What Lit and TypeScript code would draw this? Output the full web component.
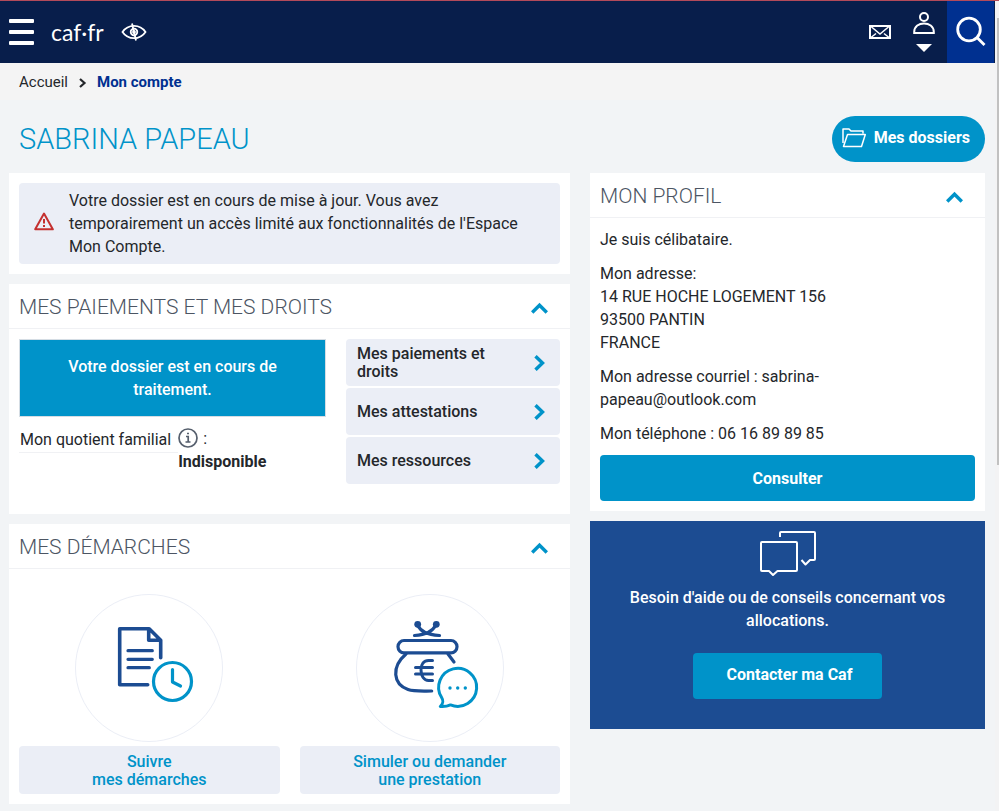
import { LitElement, html, css, svg } from "lit";
import { customElement, property, state } from "lit/decorators.js";

const reset = css`
  * { box-sizing: border-box; margin: 0; }
  a { color: inherit; text-decoration: none; }
  button { font: inherit; border: 0; padding: 0; background: none; color: inherit; cursor: pointer; }
  svg { display: block; flex: none; }
`;

@customElement("caf-header")
class CafHeader extends LitElement {
  static styles = [reset, css`
    :host { display: block; }
    .bar { display: flex; align-items: center; height: 62px; background: #081e4b; color: #fff; padding-left: 9px; }
    .logo { margin: 0 17px; font: 400 23px/32px Lato, sans-serif; }
    .tools { display: flex; align-items: center; align-self: stretch; margin-left: auto; padding-right: 1px; }
    .user { display: flex; flex-direction: column; align-items: center; gap: 10px; margin: 0 12px 0 22px; }
    .search { display: grid; place-items: center; width: 47px; align-self: stretch; background: #003090; }
  `];

  render() {
    return html`
      <header class="bar">
        <button class="menu" aria-label="Menu">
          <svg width="25" height="28" viewBox="0 0 25 28" fill="#fff">
            <rect y="1" width="25" height="4" rx="1" /><rect y="12" width="25" height="4" rx="1" /><rect y="23" width="25" height="4" rx="1" />
          </svg>
        </button>
        <a class="logo" href="#">caf·fr</a>
        <button aria-label="Contraste">
          <svg width="26" height="18" viewBox="0 0 26 18" fill="none" stroke="#fff" stroke-width="1.800">
            <path d="M1.500 9C7 .8 19 .8 24.500 9 19 17.200 7 17.200 1.500 9Z" />
            <circle cx="13" cy="9" r="3.300" /><path d="M11 0.500 15 17.500" /><circle cx="13" cy="9" r="1" />
          </svg>
        </button>
        <nav class="tools">
          <a href="#" aria-label="Messages">
            <svg width="22" height="14" viewBox="0 0 22 14" fill="none" stroke="#fff" stroke-width="2">
              <path d="M1 1h20v12H1Z" /><path d="M2 1.500l9 7.500 9-7.500M2 12.500l5-4M20 12.500l-5-4" stroke-width="1.500" />
            </svg>
          </a>
          <button class="user" aria-label="Compte">
            <svg width="22" height="22" viewBox="0 0 22 22" fill="none" stroke="#fff" stroke-width="2">
              <circle cx="11" cy="5" r="4" /><path d="M1.200 21v-1C1.200 8.500 20.800 8.500 20.800 20v1Z" />
            </svg>
            <svg width="16" height="8" viewBox="0 0 16 8" fill="#fff"><path d="M0 0h16L8 8Z" /></svg>
          </button>
          <button class="search" aria-label="Rechercher">
            <svg width="30" height="32" viewBox="0 0 30 32" fill="none" stroke="#fff" stroke-width="2.800">
              <circle cx="13" cy="13.500" r="11.300" /><path d="M21 21.500 28.500 29" />
            </svg>
          </button>
        </nav>
      </header>`;
  }
}

@customElement("caf-panel")
class CafPanel extends LitElement {
  @property() heading = "";
  @state() private open = true;

  static styles = [reset, css`
    :host { display: block; background: #fff; }
    .head { display: flex; align-items: center; justify-content: space-between; height: 45px; padding: 1px 22px 0 10px; border-bottom: 1px solid #f0f1f4; }
    .heading { font-size: 21px; line-height: 26px; font-weight: 300; color: #4c5563; }
    .toggle { padding-top: 3px; }
    .body { padding: 10px; }
    .closed { transform: rotate(180deg); }
  `];

  render() {
    return html`
      <header class="head">
        <h2 class="heading">${this.heading}</h2>
        <button class="toggle" aria-label=${this.heading} aria-expanded=${this.open} @click=${() => (this.open = !this.open)}>
          <svg class=${this.open ? "" : "closed"} width="17" height="12" viewBox="0 0 17 12" fill="none" stroke="#0093c9" stroke-width="3.400">
            <path d="M1.200 10.500 8.500 3.200l7.300 7.300" />
          </svg>
        </button>
      </header>
      ${this.open ? html`<div class="body"><slot></slot></div>` : ""}`;
  }
}

const fileClock = svg`
  <g fill="none" stroke="#1c4c92" stroke-width="3.600" stroke-linecap="round" stroke-linejoin="round">
    <path d="M72.700 90.700H44.700V34.700h29.500L85.700 46.300v17.400M73.700 35v11.300h11.500" />
    <path d="M53 56.700h24.300M53 65.300h24.300M53 73.700h21.300" stroke-width="3.200" />
  </g>
  <g fill="none" stroke="#0093c9" stroke-width="3.200" stroke-linecap="round" stroke-linejoin="round">
    <circle cx="97.500" cy="87.500" r="19" /><path d="M97.500 75.500v12.500l8 4" />
  </g>`;

const purseChat = svg`
  <g fill="none" stroke="#1c4c92" stroke-width="3.200" stroke-linecap="round" stroke-linejoin="round">
    <rect x="42" y="46.500" width="59" height="12.300" rx="6" />
    <path d="M58.500 41.500C70 40.500 76 38 80 31M83.500 41.500C71 40.500 65 38 61.500 31" />
    <path d="M50 60C35 73 37 90 52 95.500 58 97.600 66 97 75.700 97M92 60l6 8" />
    <path d="M76.500 66.500h-4c-4.500 0-7.500 3.500-7.500 9.500s3 10.500 7.500 10.500h4M59.500 73.500h17M59.500 80h17" stroke-width="3" />
  </g>
  <g fill="#1c4c92"><circle cx="61.700" cy="30.300" r="3.400" /><circle cx="80.300" cy="30.300" r="3.400" /></g>
  <path d="M94.500 110.900A19 19 0 1 0 85.500 103.300C87.500 106.500 87.800 109 84.300 112.500 88 112.800 91.500 112.300 94.500 110.900Z" fill="none" stroke="#0093c9" stroke-width="3" stroke-linejoin="round" />
  <g fill="#0093c9"><circle cx="94" cy="94" r="1.700" /><circle cx="101.700" cy="94" r="1.700" /><circle cx="109.300" cy="94" r="1.700" /></g>`;

@customElement("app-root")
class AppRoot extends LitElement {
  static styles = [reset, css`
    :host { display: block; font: 400 16px/23px Roboto, sans-serif; color: #24272b; }
    .shell { display: flex; min-height: 100vh; background: #f2f4f6; border-top: 1px solid #b34a5a; }
    .page { flex: 1; min-width: 0; }
    .track { width: 4px; flex: none; padding: 17px 0 0 2px; background: #f3f3f4; }
    .thumb { height: 447px; background: #c1c1c1; }
    .crumbs { display: flex; align-items: center; gap: 10px; height: 37px; padding: 2px 0 0 19px; background: #f4f4f4; font-size: 15px; }
    .here { font-weight: 700; color: #003090; }
    .top { display: flex; align-items: center; justify-content: space-between; height: 73px; padding: 5px 10px 0 19px; }
    .name { font-size: 29px; line-height: 36px; font-weight: 300; color: #0093c9; }
    .files { display: flex; align-items: center; gap: 8px; height: 46px; padding: 0 15px 3px 10px; border-radius: 23px; background: #0093c9; color: #fff; font-weight: 700; }
    .columns { display: grid; grid-template-columns: minmax(0, 1fr) 395px; gap: 20px; align-items: start; padding: 0 10px 7px 9px; }
    .stack { display: flex; flex-direction: column; gap: 10px; }
    .notice { background: #fff; padding: 10px; }
    .alert { display: flex; align-items: center; gap: 15px; padding: 6px 15px; border-radius: 4px; background: #ebeef6; }
    .pay { display: grid; grid-template-columns: minmax(0, 1fr) 214px; gap: 20px; padding-bottom: 20px; }
    .status { padding: 15px 40px; border: 1px solid #d5dde4; background: #0093c9; color: #fff; text-align: center; font-weight: 500; }
    .quotient { display: grid; grid-template-columns: auto 1fr; align-items: start; margin-top: 10px; }
    .label { padding: 1px 7px 1px 1px; border-bottom: 1px solid #f0f1f4; }
    .value { display: flex; align-items: center; gap: 5px; }
    .result { grid-column: 2; font-weight: 700; margin-top: -3px; }
    .links { display: flex; flex-direction: column; gap: 2px; }
    .link { display: flex; align-items: center; justify-content: space-between; gap: 40px; height: 47px; padding: 0 14px 0 11px; border-radius: 4px; background: #ebeef6; font-weight: 500; line-height: 18px; }
    .tasks { display: grid; grid-template-columns: 1fr 1fr; gap: 20px; padding-top: 15px; }
    .task { display: flex; flex-direction: column; align-items: center; gap: 4px; color: #0093c9; font-weight: 500; line-height: 18px; text-align: center; }
    .caption { align-self: stretch; padding: 7px 6px 5px; border-radius: 4px; background: #ebeef6; }
    .profile { display: flex; flex-direction: column; gap: 11px; }
    .email { max-width: 250px; }
    .button { display: block; height: 46px; border-radius: 4px; background: #0093c9; color: #fff; font-weight: 700; text-align: center; }
    .wide { width: 100%; margin-top: 10px; }
    .help { display: flex; flex-direction: column; align-items: center; padding: 10px 30px 30px; background: #1c4c92; color: #fff; text-align: center; font-weight: 500; }
    .pitch { margin: 10px 0 21px; }
    .contact { width: 189px; padding: 0 0 3px 4px; }
  `];

  private link(text: string) {
    return html`<a class="link" href="#"><span>${text}</span>
      <svg width="12" height="16" viewBox="0 0 12 16" fill="none" stroke="#0093c9" stroke-width="3.400"><path d="M1.500 1.200 8.500 8l-7 6.800" /></svg></a>`;
  }

  private task(icon: unknown, first: string, second: string) {
    return html`<a class="task" href="#">
      <svg width="148" height="148" viewBox="0 0 148 148">
        <circle cx="74" cy="74" r="73.500" fill="#fff" stroke="#ebeef6" />${icon}
      </svg>
      <span class="caption">${first}<br />${second}</span></a>`;
  }

  render() {
    return html`
      <div class="shell">
        <div class="page">
          <caf-header></caf-header>
          <nav class="crumbs" aria-label="Fil d'Ariane">
            <a href="#">Accueil</a>
            <svg width="9" height="10" viewBox="0 0 9 10" fill="none" stroke="#24272b" stroke-width="2.200"><path d="M2 1 6.500 5 2 9" /></svg>
            <span class="here" aria-current="page">Mon compte</span>
          </nav>
          <div class="top">
            <h1 class="name">SABRINA PAPEAU</h1>
            <button class="files">
              <svg width="24" height="20" viewBox="0 0 24 20" fill="none" stroke="#fff" stroke-width="1.500" stroke-linejoin="round">
                <path d="M1 15V1h6l2 2h12v2.500M5.500 6.500H23.300L19.500 18.500H1.500Z" />
              </svg>
              Mes dossiers
            </button>
          </div>
          <main class="columns">
            <div class="stack">
              <section class="notice">
                <div class="alert" role="alert">
                  <svg width="20" height="24" viewBox="0 0 20 24" fill="none" stroke="#c4302f" stroke-width="2" stroke-linejoin="round">
                    <path d="M10 1.500 18.800 17.300H1.200ZM10 7v4.500M10 13v2" />
                  </svg>
                  <p>Votre dossier est en cours de mise à jour. Vous avez temporairement un accès limité aux fonctionnalités de l'Espace Mon Compte.</p>
                </div>
              </section>
              <caf-panel heading="MES PAIEMENTS ET MES DROITS">
                <div class="pay">
                  <div>
                    <p class="status">Votre dossier est en cours de traitement.</p>
                    <div class="quotient">
                      <span class="label">Mon quotient familial</span>
                      <span class="value">
                        <svg width="20" height="22" viewBox="0 0 20 22" fill="none" stroke="#565f6d" stroke-width="1.700">
                          <circle cx="10" cy="10" r="9" /><path d="M8 8.500h2.200v5.500M7.500 14h5M9 5.500h2" />
                        </svg>
                        :
                      </span>
                      <span class="result">Indisponible</span>
                    </div>
                  </div>
                  <nav class="links">
                    ${["Mes paiements et droits", "Mes attestations", "Mes ressources"].map((t) => this.link(t))}
                  </nav>
                </div>
              </caf-panel>
              <caf-panel heading="MES DÉMARCHES">
                <div class="tasks">
                  ${this.task(fileClock, "Suivre", "mes démarches")}
                  ${this.task(purseChat, "Simuler ou demander", "une prestation")}
                </div>
              </caf-panel>
            </div>
            <aside class="stack">
              <caf-panel heading="MON PROFIL">
                <div class="profile">
                  <p>Je suis célibataire.</p>
                  <p>Mon adresse:<br />14 RUE HOCHE LOGEMENT 156<br />93500 PANTIN<br />FRANCE</p>
                  <p class="email">Mon adresse courriel : sabrina-papeau@outlook.com</p>
                  <p>Mon téléphone : 06 16 89 89 85</p>
                </div>
                <button class="button wide">Consulter</button>
              </caf-panel>
              <section class="help">
                <svg width="56" height="45" viewBox="0 0 56 45" fill="none" stroke="#fff" stroke-width="2" stroke-linejoin="round">
                  <path d="M2 11h34q1 0 1 1v27q0 1-1 1H17.500L13 44 9 40H2q-1 0-1-1V12q0-1 1-1ZM20 6V2q0-1 1-1h33q1 0 1 1v26q0 1-1 1h-4l-4.500 4.500L41.500 29" />
                </svg>
                <p class="pitch">Besoin d'aide ou de conseils concernant vos allocations.</p>
                <button class="button contact">Contacter ma Caf</button>
              </section>
            </aside>
          </main>
        </div>
        <div class="track" aria-hidden="true"><div class="thumb"></div></div>
      </div>`;
  }
}
